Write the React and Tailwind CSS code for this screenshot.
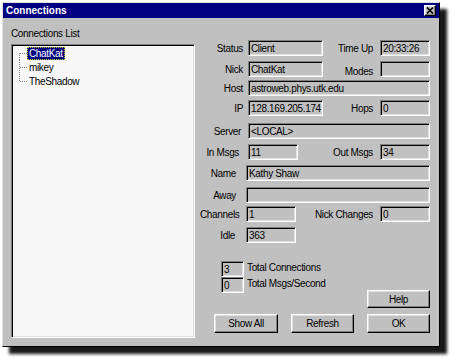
import React from 'react'

const sunken = 'border border-t-[#808080] border-l-[#808080] border-b-white border-r-white shadow-[inset_1px_1px_0_#000,inset_-1px_-1px_0_#dfdfdf]'
const raised = 'border border-t-white border-l-white border-b-black border-r-black shadow-[inset_-1px_-1px_0_#808080,inset_1px_1px_0_#dfdfdf]'

function Field({ className, children }) {
  return (
    <div className={`${sunken} ${className} h-[16px] bg-[#c0c0c0] pl-[2px] leading-[15px] whitespace-nowrap overflow-hidden`}>
      {children}
    </div>
  )
}

function Button({ className, children }) {
  return (
    <div className={`${raised} ${className} flex items-center justify-center bg-[#c0c0c0]`}>
      {children}
    </div>
  )
}

function Connector({ kind }) {
  // dotted tree lines: first / middle / last
  return (
    <svg width="10" height="14" className="shrink-0">
      <line
        x1="2.5"
        x2="2.5"
        y1={kind === 'first' ? 7 : 0}
        y2={kind === 'last' ? 7 : 14}
        stroke="#808080"
        strokeDasharray="1 1"
      />
      <line x1="3" x2="10" y1="7.5" y2="7.5" stroke="#808080" strokeDasharray="1 1" />
    </svg>
  )
}

function TreeItem({ kind, selected, children }) {
  return (
    <div className="flex h-[14px] items-center pl-[5px]">
      <Connector kind={kind} />
      <span
        className={
          selected
            ? 'border border-dotted border-[#d0d000] bg-[#000080] px-[1px] leading-[11px] text-white'
            : 'border border-transparent px-[1px] leading-[11px]'
        }
      >
        {children}
      </span>
    </div>
  )
}

export default function App() {
  return (
    <div className="h-[358px] w-[452px] bg-white text-[10px] tracking-[-0.35px] text-black [font-family:'Liberation_Sans',Arial,sans-serif]">
      <div className="ml-[2px] mt-[2px] flex h-[345px] w-[438px] flex-col border border-t-[#dfdfdf] border-l-[#dfdfdf] border-b-black border-r-black bg-[#c0c0c0] shadow-[7px_7px_3px_rgba(0,0,0,0.9)]">
        {/* title bar */}
        <div className="flex h-[15px] items-center bg-[#000080] pl-[3px] pr-[3px]">
          <span className="text-[10px] font-bold tracking-normal text-white">Connections</span>
          <div className={`${raised} ml-auto flex h-[11px] w-[12px] items-center justify-center bg-[#c0c0c0]`}>
            <svg width="8" height="7" viewBox="0 0 8 7">
              <path d="M1 0.5 L7 6.5 M7 0.5 L1 6.5" stroke="#000" strokeWidth="1.6" />
            </svg>
          </div>
        </div>

        <div className="flex pl-[8px]">
          {/* left column */}
          <div className="mt-[10px] flex w-[184px] flex-col">
            <div className="h-[12px] leading-[12px]">Connections List</div>
            <div className={`${sunken} mt-[4px] h-[294px] bg-[#f7f7f7] pt-[1px]`}>
              <TreeItem kind="first" selected>ChatKat</TreeItem>
              <TreeItem kind="mid">mikey</TreeItem>
              <TreeItem kind="last">TheShadow</TreeItem>
            </div>
          </div>

          {/* right column */}
          <div className="ml-[5px] flex w-[230px] flex-col">
            <div className="mt-[22px] flex h-[16px] items-center">
              <div className="w-[43px] text-right">Status</div>
              <Field className="ml-[5px] w-[75px]">Client</Field>
              <div className="flex-1 pr-[7px] text-right">Time Up</div>
              <Field className="w-[50px]">20:33:26</Field>
            </div>
            <div className="mt-[5px] flex h-[16px] items-center">
              <div className="w-[43px] text-right">Nick</div>
              <Field className="ml-[5px] w-[75px]">ChatKat</Field>
              <div className="flex-1 pr-[7px] pt-[4px] text-right">Modes</div>
              <Field className="w-[50px]"></Field>
            </div>
            <div className="mt-[3px] flex h-[16px] items-center">
              <div className="w-[43px] text-right">Host</div>
              <Field className="ml-[5px] w-[182px]">astroweb.phys.utk.edu</Field>
            </div>
            <div className="mt-[4px] flex h-[16px] items-center">
              <div className="w-[43px] text-right">IP</div>
              <Field className="ml-[5px] w-[75px]">128.169.205.174</Field>
              <div className="flex-1 pr-[7px] text-right">Hops</div>
              <Field className="w-[50px]">0</Field>
            </div>
            <div className="mt-[7px] flex h-[16px] items-center">
              <div className="w-[41px] text-right">Server</div>
              <Field className="ml-[7px] w-[182px]">&lt;LOCAL&gt;</Field>
            </div>
            <div className="mt-[5px] flex h-[16px] items-center">
              <div className="w-[39px] text-right">In Msgs</div>
              <Field className="ml-[9px] w-[50px]">11</Field>
              <div className="flex-1 pr-[7px] text-right">Out Msgs</div>
              <Field className="w-[50px]">34</Field>
            </div>
            <div className="mt-[5px] flex h-[16px] items-center">
              <div className="w-[36px] text-right">Name</div>
              <Field className="ml-[10px] w-[184px]">Kathy Shaw</Field>
            </div>
            <div className="mt-[6px] flex h-[16px] items-center">
              <div className="w-[36px] text-right">Away</div>
              <Field className="ml-[10px] w-[184px]"></Field>
            </div>
            <div className="mt-[3px] flex h-[16px] items-center">
              <div className="w-[39px] text-right">Channels</div>
              <Field className="ml-[7px] w-[50px]">1</Field>
              <div className="flex-1 pr-[7px] text-right">Nick Changes</div>
              <Field className="w-[50px]">0</Field>
            </div>
            <div className="mt-[5px] flex h-[16px] items-center">
              <div className="w-[35px] text-right">Idle</div>
              <Field className="ml-[11px] w-[50px]">363</Field>
            </div>

            {/* totals + help */}
            <div className="mt-[18px] flex items-start">
              <div className="ml-[21px] flex flex-col">
                <div className="flex h-[16px] items-center">
                  <Field className="w-[23px]">3</Field>
                  <span className="ml-[3px] -mt-[3px]">Total Connections</span>
                </div>
                <div className="flex h-[16px] items-center">
                  <Field className="w-[23px]">0</Field>
                  <span className="ml-[3px] -mt-[3px]">Total Msgs/Second</span>
                </div>
              </div>
              <Button className="ml-auto mt-[29px] h-[18px] w-[63px]">Help</Button>
            </div>

            <div className="mt-[6px] flex">
              <Button className="ml-[14px] h-[19px] w-[64px]">Show All</Button>
              <Button className="ml-[13px] h-[19px] w-[63px]">Refresh</Button>
              <Button className="ml-[13px] h-[19px] w-[63px]">OK</Button>
            </div>
          </div>
        </div>
      </div>
    </div>
  )
}
